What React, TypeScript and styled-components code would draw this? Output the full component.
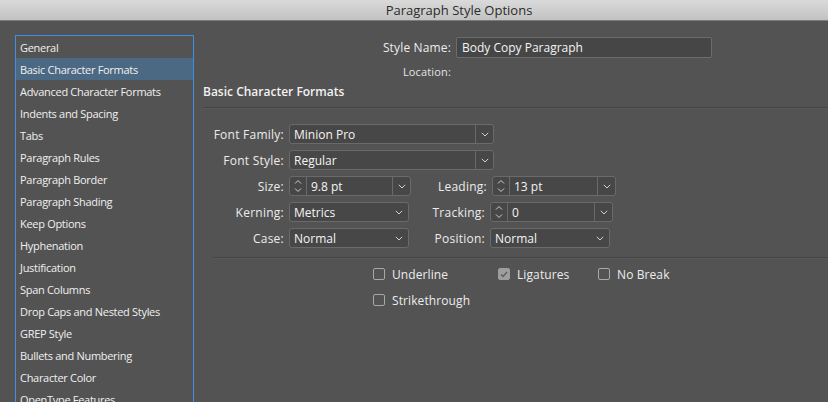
import React from "react";
import styled, { createGlobalStyle } from "styled-components";

const GlobalStyle = createGlobalStyle`
	html, body {
		margin: 0;
		padding: 0;
		width: 828px;
		height: 402px;
		overflow: hidden;
		background: #535353;
		font-family: "Open Sans", "Noto Sans", sans-serif;
	}
	* {
		box-sizing: border-box;
	}
`;

const Window = styled.div`
	width: 828px;
	height: 402px;
	display: flex;
	flex-direction: column;
	background: #535353;
	overflow: hidden;
`;

const TitleBar = styled.div`
	height: 21px;
	flex: none;
	display: flex;
	align-items: center;
	justify-content: center;
	padding-left: 90px;
	background: linear-gradient(#dadada, #c2c2c2);
	border-bottom: 1px solid #7c7c7c;
	color: #2b2b2b;
	font-size: 13px;
`;

const Body = styled.div`
	flex: 1;
	display: flex;
	align-items: flex-start;
	padding: 14px 0 0 15px;
	min-height: 0;
`;

const SectionList = styled.ul`
	list-style: none;
	margin: 0;
	padding: 0;
	width: 179px;
	height: 400px;
	flex: none;
	border: 1px solid #3d8ee6;
	overflow: hidden;
`;

const SectionItem = styled.li<{ $active?: boolean }>`
	height: 22px;
	display: flex;
	align-items: center;
	padding-left: 4px;
	font-size: 11px;
	letter-spacing: -0.3px;
	color: #f0f0f0;
	white-space: nowrap;
	background: ${(p) => (p.$active ? "#4c6984" : "transparent")};
`;

const Pane = styled.div`
	flex: 1;
	display: flex;
	flex-direction: column;
	padding-left: 9px;
`;

const NameRow = styled.div`
	display: flex;
	align-items: center;
	height: 22px;
	margin-top: 1px;
`;

const HeadLabel = styled.div`
	width: 253px;
	text-align: right;
	font-size: 12px;
	letter-spacing: 0.15px;
	color: #ececec;
	padding-right: 5px;
	flex: none;
`;

const TextInput = styled.div`
	width: 256px;
	height: 21px;
	display: flex;
	align-items: center;
	padding-left: 5px;
	background: #464646;
	border: 1px solid #6c6c6c;
	border-radius: 2px;
	color: #f4f4f4;
	font-size: 12px;
`;

const LocationRow = styled.div`
	display: flex;
	align-items: center;
	height: 20px;
	margin-top: 3px;
`;

const SmallLabel = styled(HeadLabel)`
	font-size: 11px;
	color: #e4e4e4;
`;

const Heading = styled.div`
	font-size: 12px;
	font-weight: 600;
	color: #f2f2f2;
	margin-top: 2px;
	height: 18px;
	line-height: 18px;
`;

const Rule = styled.div<{ $inset?: number }>`
	height: 2px;
	background: #454545;
	margin-left: ${(p) => p.$inset ?? 0}px;
	border-bottom: 1px solid #595959;
`;

const HeadingRule = styled.div`
	margin-top: 6px;
`;

const Form = styled.div`
	display: flex;
	flex-direction: column;
	gap: 6px;
	padding-left: 10px;
	margin-top: 15px;
`;

const FormRow = styled.div`
	display: flex;
	align-items: center;
	height: 20px;
`;

const FieldLabel = styled.div<{ $width: number }>`
	width: ${(p) => p.$width}px;
	flex: none;
	text-align: right;
	padding-right: 5px;
	font-size: 12px;
	letter-spacing: 0.25px;
	color: #ececec;
	white-space: nowrap;
`;

const Field = styled.div<{ $width: number }>`
	width: ${(p) => p.$width}px;
	height: 20px;
	flex: none;
	display: flex;
	align-items: stretch;
	background: #474747;
	border: 1px solid #6a6a6a;
	border-radius: 3px;
	color: #f4f4f4;
	font-size: 12px;
`;

const FieldText = styled.div`
	flex: 1;
	display: flex;
	align-items: center;
	padding-left: 4px;
	white-space: nowrap;
`;

const Segment = styled.div<{ $width: number; $side: "left" | "right" }>`
	width: ${(p) => p.$width}px;
	flex: none;
	display: flex;
	flex-direction: column;
	align-items: center;
	justify-content: center;
	${(p) => (p.$side === "left" ? "border-right" : "border-left")}: 1px solid #6a6a6a;
`;

const Caret = styled.div`
	width: 18px;
	flex: none;
	display: flex;
	align-items: center;
	justify-content: center;
`;

const Divider = styled.div`
	margin-top: 9px;
`;

const Checks = styled.div`
	display: grid;
	grid-template-columns: 125px 100px auto;
	row-gap: 10px;
	padding-left: 170px;
	margin-top: 7px;
`;

const CheckItem = styled.label`
	display: flex;
	align-items: center;
	gap: 7px;
	height: 16px;
	font-size: 12px;
	letter-spacing: 0.1px;
	color: #ececec;
	white-space: nowrap;
`;

const Box = styled.span<{ $checked?: boolean }>`
	width: 12px;
	height: 12px;
	flex: none;
	border: 1px solid ${(p) => (p.$checked ? "#9c9c9c" : "#a8a8a8")};
	background: ${(p) => (p.$checked ? "#9e9e9e" : "transparent")};
	border-radius: 2px;
	display: flex;
	align-items: center;
	justify-content: center;
`;

const ChevronDown = () => (
	<svg width="8" height="5" viewBox="0 0 8 5">
		<path d="M0.8 0.8 L4 4 L7.2 0.8" fill="none" stroke="#d0d0d0" strokeWidth="1" />
	</svg>
);

const Stepper = () => (
	<Segment $width={17} $side="left">
		<svg width="8" height="14" viewBox="0 0 8 14">
			<path d="M1 4.5 L4 1.5 L7 4.5" fill="none" stroke="#cfcfcf" strokeWidth="1" />
			<path d="M1 9.5 L4 12.5 L7 9.5" fill="none" stroke="#cfcfcf" strokeWidth="1" />
		</svg>
	</Segment>
);

type SelectProps = {
	width: number;
	value: string;
	split?: boolean;
	stepper?: boolean;
};

const Select = ({ width, value, split, stepper }: SelectProps) => (
	<Field $width={width}>
		{stepper && <Stepper />}
		<FieldText>{value}</FieldText>
		{split ? (
			<Segment $width={18} $side="right">
				<ChevronDown />
			</Segment>
		) : (
			<Caret>
				<ChevronDown />
			</Caret>
		)}
	</Field>
);

const Check = ({ label, checked }: { label: string; checked?: boolean }) => (
	<CheckItem>
		<Box $checked={checked}>
			{checked && (
				<svg width="8" height="7" viewBox="0 0 8 7">
					<path d="M1 3.5 L3 5.5 L7 1" fill="none" stroke="#5e5e5e" strokeWidth="1.4" />
				</svg>
			)}
		</Box>
		{label}
	</CheckItem>
);

const sections = [
	"General",
	"Basic Character Formats",
	"Advanced Character Formats",
	"Indents and Spacing",
	"Tabs",
	"Paragraph Rules",
	"Paragraph Border",
	"Paragraph Shading",
	"Keep Options",
	"Hyphenation",
	"Justification",
	"Span Columns",
	"Drop Caps and Nested Styles",
	"GREP Style",
	"Bullets and Numbering",
	"Character Color",
	"OpenType Features",
];

const App = (): JSX.Element => (
	<Window>
		<GlobalStyle />
		<TitleBar>Paragraph Style Options</TitleBar>
		<Body>
			<SectionList>
				{sections.map((s, i) => (
					<SectionItem key={s} $active={i === 1}>
						{s}
					</SectionItem>
				))}
			</SectionList>
			<Pane>
				<NameRow>
					<HeadLabel>Style Name:</HeadLabel>
					<TextInput>Body Copy Paragraph</TextInput>
				</NameRow>
				<LocationRow>
					<SmallLabel>Location:</SmallLabel>
				</LocationRow>
				<Heading>Basic Character Formats</Heading>
				<HeadingRule>
					<Rule />
				</HeadingRule>
				<Form>
					<FormRow>
						<FieldLabel $width={76}>Font Family:</FieldLabel>
						<Select width={205} value="Minion Pro" split />
					</FormRow>
					<FormRow>
						<FieldLabel $width={76}>Font Style:</FieldLabel>
						<Select width={205} value="Regular" split />
					</FormRow>
					<FormRow>
						<FieldLabel $width={76}>Size:</FieldLabel>
						<Select width={122} value="9.8 pt" split stepper />
						<FieldLabel $width={81}>Leading:</FieldLabel>
						<Select width={124} value="13 pt" split stepper />
					</FormRow>
					<FormRow>
						<FieldLabel $width={76}>Kerning:</FieldLabel>
						<Select width={120} value="Metrics" />
						<FieldLabel $width={81}>Tracking:</FieldLabel>
						<Select width={123} value="0" split stepper />
					</FormRow>
					<FormRow>
						<FieldLabel $width={76}>Case:</FieldLabel>
						<Select width={120} value="Normal" />
						<FieldLabel $width={81}>Position:</FieldLabel>
						<Select width={120} value="Normal" />
					</FormRow>
				</Form>
				<Divider>
					<Rule $inset={10} />
				</Divider>
				<Checks>
					<Check label="Underline" />
					<Check label="Ligatures" checked />
					<Check label="No Break" />
					<Check label="Strikethrough" />
				</Checks>
			</Pane>
		</Body>
	</Window>
);

export default App;
